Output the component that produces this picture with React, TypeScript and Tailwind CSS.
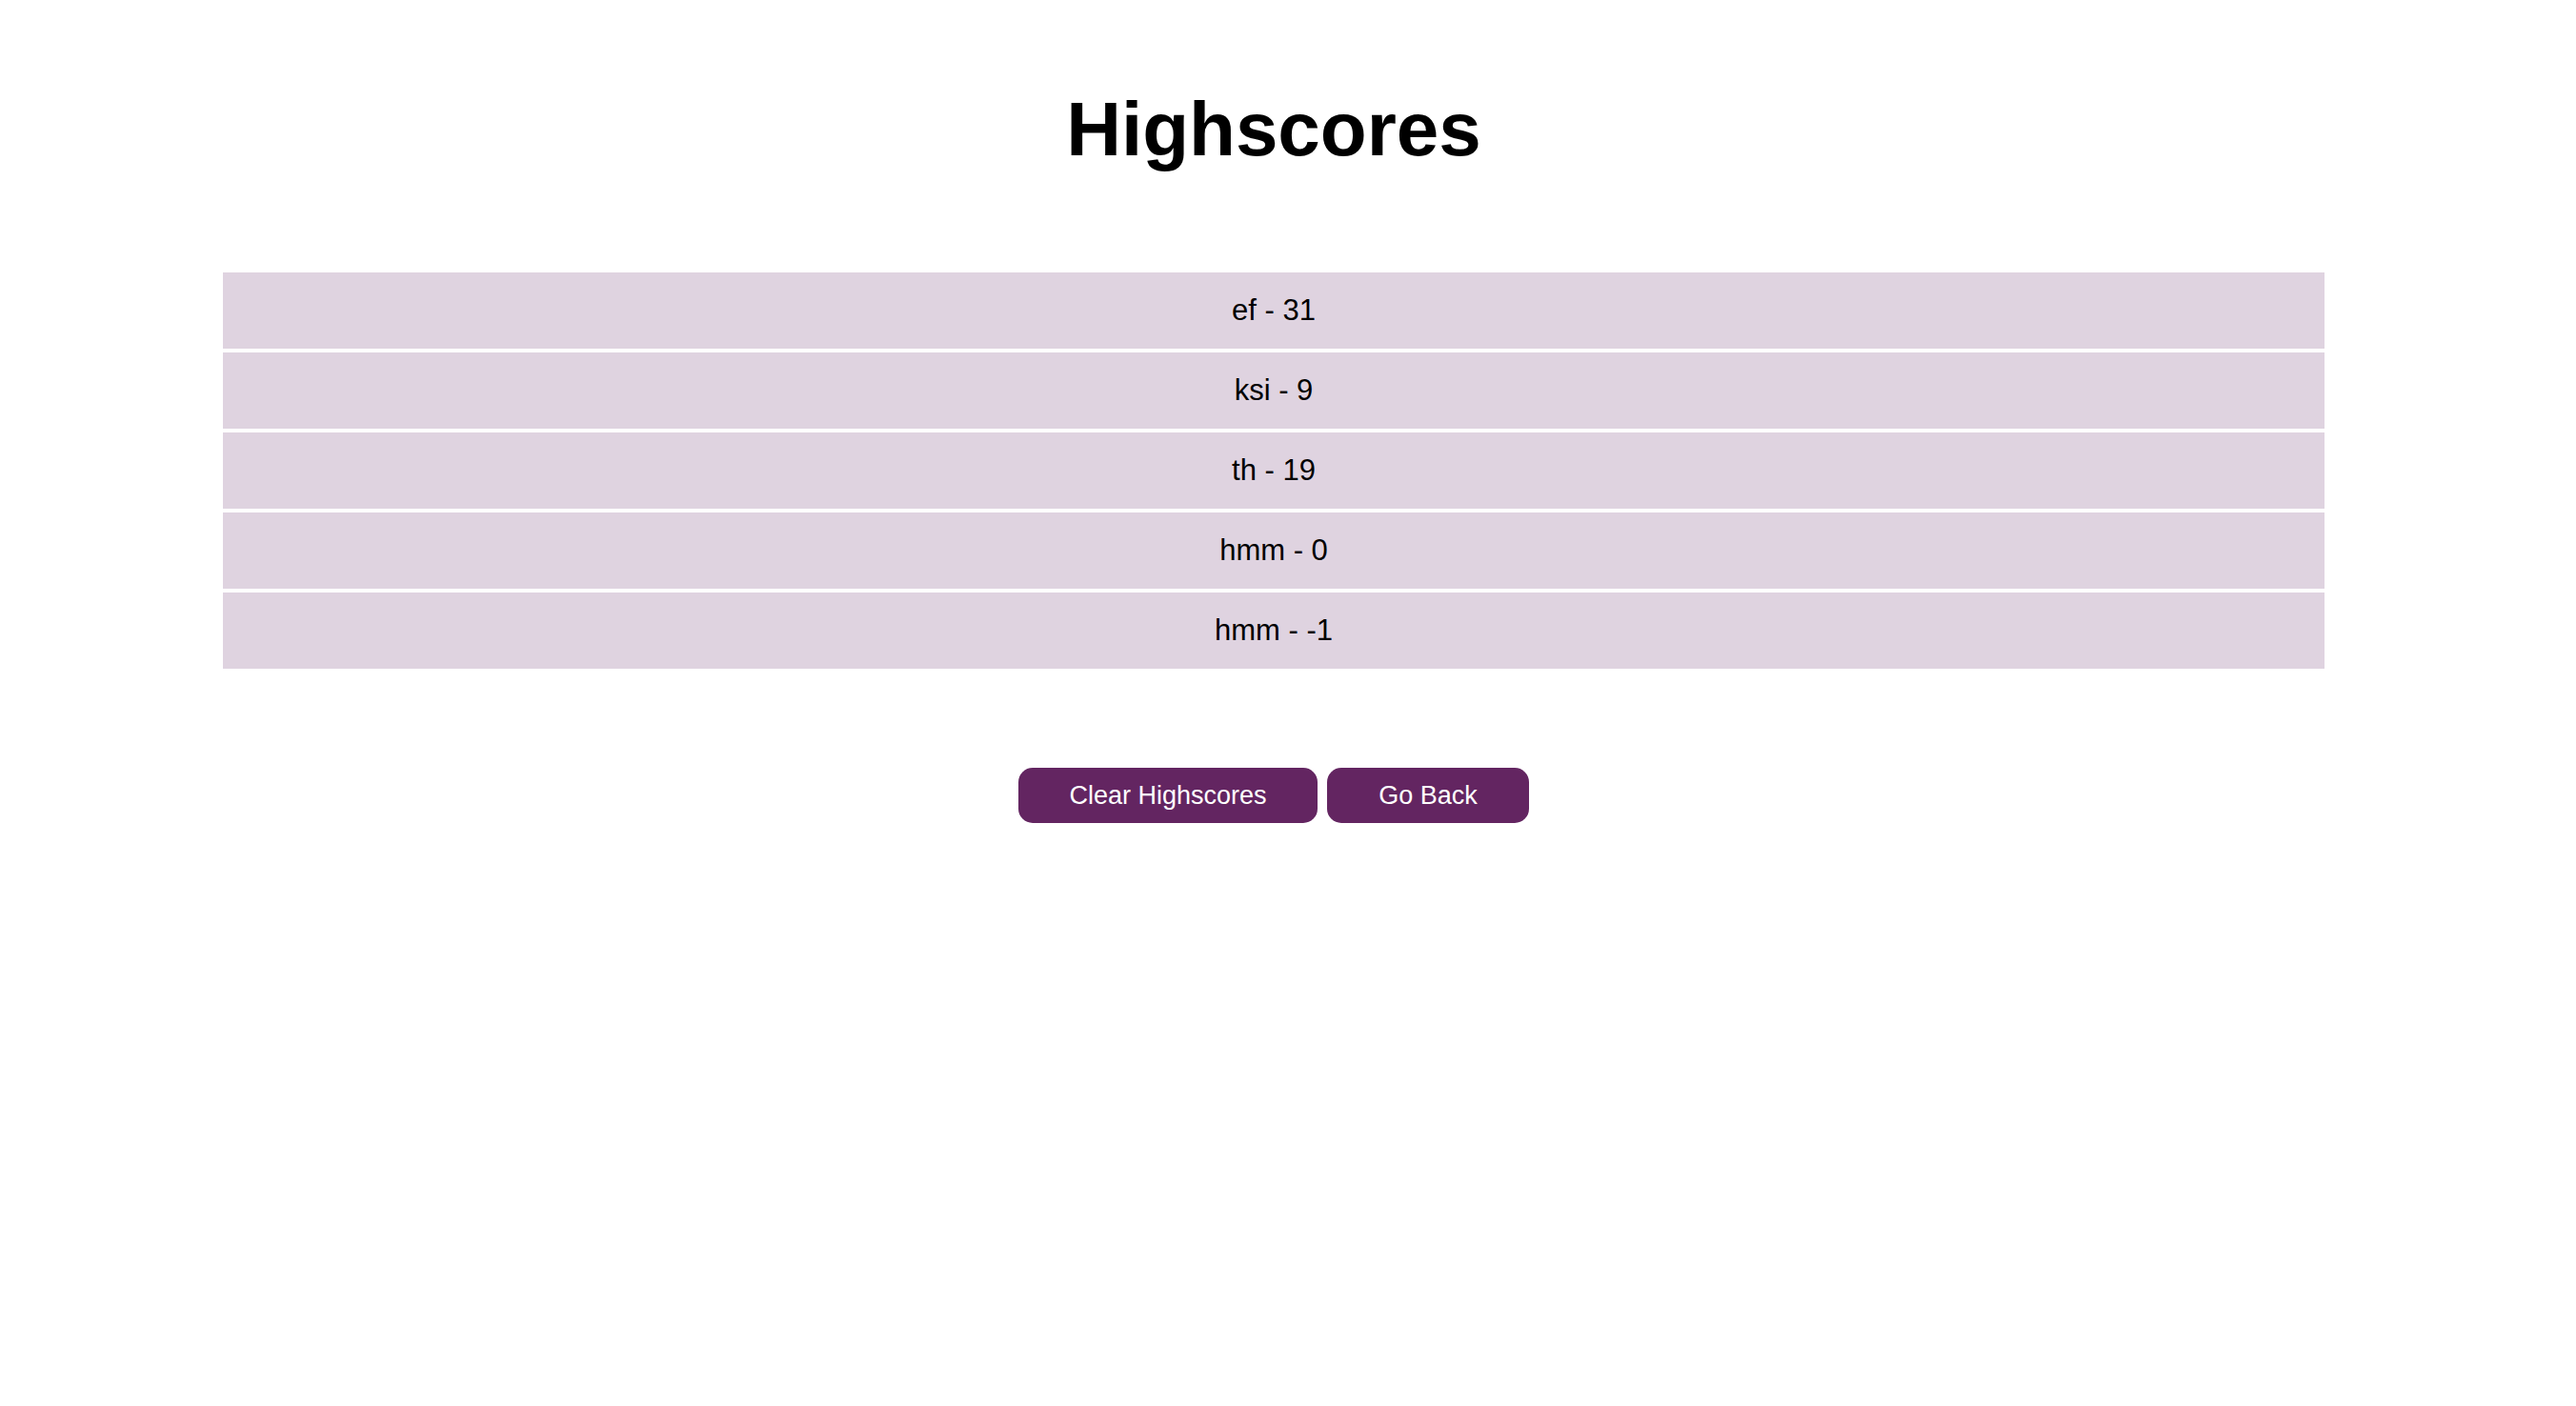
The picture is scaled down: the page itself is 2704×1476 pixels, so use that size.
import React from "react";

const scores = [
  { name: "ef", score: 31 },
  { name: "ksi", score: 9 },
  { name: "th", score: 19 },
  { name: "hmm", score: 0 },
  { name: "hmm", score: -1 },
];

export default function App() {
  return (
    <div
      className="min-h-[1476px] w-full bg-white text-black"
      style={{ fontFamily: '"Liberation Sans", Arial, Helvetica, sans-serif' }}
    >
      <div className="ml-[234px] w-[2206px] flex flex-col">
        <h1 className="mt-[96px] text-center text-[80px] font-bold leading-none">
          Highscores
        </h1>
        <ul className="mt-[110px] flex flex-col gap-[4px]">
          {scores.map((s, i) => (
            <li
              key={i}
              className="h-[80px] flex items-center justify-center bg-[#dfd3e0] text-[31px]"
            >
              {s.name} - {s.score}
            </li>
          ))}
        </ul>
        <div className="mt-[104px] flex justify-center gap-[10px]">
          <button className="w-[314px] h-[58px] rounded-[15px] bg-[#632561] text-white text-[27px] flex items-center justify-center">
            Clear Highscores
          </button>
          <button className="w-[212px] h-[58px] rounded-[15px] bg-[#632561] text-white text-[27px] flex items-center justify-center">
            Go Back
          </button>
        </div>
      </div>
    </div>
  );
}
